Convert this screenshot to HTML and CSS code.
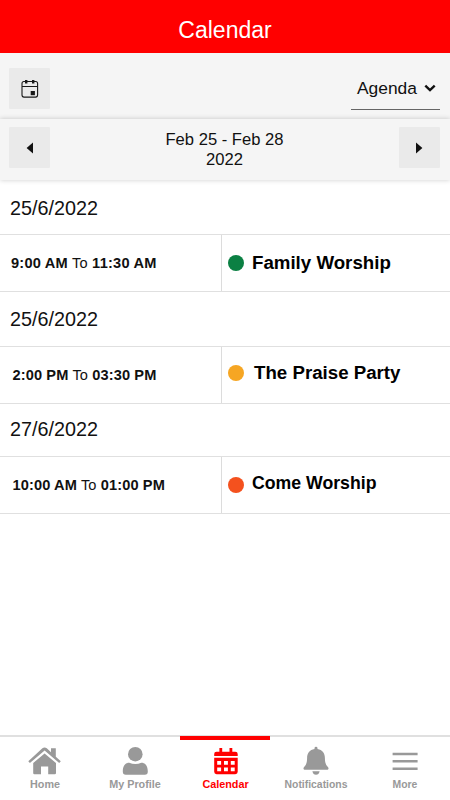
FILE: index.html
```html
<!DOCTYPE html>
<html lang="en">
<head>
    <meta charset="UTF-8">
    <title>Calendar</title>
    <link rel="stylesheet" href="styles.css">
</head>
<body>
<div class="app">
    <header class="header">
        <h1>Calendar</h1>
    </header>
    <div class="toolbar">
        <button class="btn">
            <svg width="18" height="20" viewBox="0 0 18 20">
                <rect x="1" y="2.5" width="15.6" height="15.6" rx="2" fill="none" stroke="#181818" stroke-width="1.1"/>
                <path d="M1 7.5h15.6M2.5 2.5h12.6" stroke="#181818" stroke-width="1.1"/>
                <path d="M5.2 .9v3.6M12.2 .9v3.6" stroke="#181818" stroke-width="2.4"/>
                <rect x="9.7" y="12" width="4.2" height="4.2" fill="#181818"/>
            </svg>
        </button>
        <div class="select">
            <span>Agenda</span>
            <svg width="12" height="9" viewBox="0 0 12 9">
                <path d="M1.3 1.7L6 6.1l4.7-4.4" fill="none" stroke="#111" stroke-width="2.4"/>
            </svg>
        </div>
    </div>
    <div class="range">
        <button class="btn">
            <svg width="8" height="12" viewBox="0 0 8 12"><path d="M7 .6v10.8L.6 6z" fill="#111"/></svg>
        </button>
        <p>Feb 25 - Feb 28<br>2022</p>
        <button class="btn">
            <svg width="8" height="12" viewBox="0 0 8 12"><path d="M1 .6v10.8L7.4 6z" fill="#111"/></svg>
        </button>
    </div>
    <main class="agenda">
        <section class="day first">
            <h2>25/6/2022</h2>
            <div class="event">
                <div class="time"><b>9:00 AM</b> To <b>11:30 AM</b></div>
                <div class="name"><i class="dot green"></i><span>Family Worship</span></div>
            </div>
        </section>
        <section class="day second">
            <h2>25/6/2022</h2>
            <div class="event">
                <div class="time"><b>2:00 PM</b> To <b>03:30 PM</b></div>
                <div class="name"><i class="dot yellow"></i><span>The Praise Party</span></div>
            </div>
        </section>
        <section class="day third">
            <h2>27/6/2022</h2>
            <div class="event">
                <div class="time"><b>10:00 AM</b> To <b>01:00 PM</b></div>
                <div class="name"><i class="dot orange"></i><span>Come Worship</span></div>
            </div>
        </section>
    </main>
    <nav class="tabs">
        <a class="tab">
            <svg width="34" height="30" viewBox="0 0 34 30">
                <path d="M.3 15.2L14.4 2.3q2.2-1.7 4.4 0L23 6.3V2.2h4.8v8.5l5 4.5-1.6 1.9L16.6 4.6 1.9 17.1z"/>
                <path d="M16.6 7.4L28 17v10q0 1.2-1.2 1.2h-6.6v-7.7h-7.2v7.7H6.4q-1.2 0-1.2-1.2V17z"/>
            </svg>
            <span>Home</span>
        </a>
        <a class="tab">
            <svg width="34" height="30" viewBox="0 0 34 30">
                <circle cx="17.3" cy="8.2" r="7.3"/>
                <path d="M4.8 25.5c0-6 2.5-8.8 6.5-8.8q2.8 1.4 6 1.4t6-1.4c4 0 6.5 2.8 6.5 8.8q0 3.3-3 3.3h-19q-3 0-3-3.3z"/>
            </svg>
            <span>My Profile</span>
        </a>
        <a class="tab active">
            <svg width="34" height="30" viewBox="0 0 34 30">
                <path d="M5.2 10V7.9q0-2.2 2.2-2.2h3V2h2.8v3.7h7.3V2h2.8v3.7h3q2.4 0 2.4 2.2V10z"/>
                <path fill-rule="evenodd" d="M5.2 11.8h23.5v14q0 2.4-2.4 2.4H7.6q-2.4 0-2.4-2.4zM8.2 15v3.8h3.9V15zM15 15v3.8h3.9V15zM21.8 15v3.8h3.9V15zM8.2 21.4v3.8h3.9v-3.8zM15 21.4v3.8h3.9v-3.8zM21.8 21.4v3.8h3.9v-3.8z"/>
            </svg>
            <span>Calendar</span>
        </a>
        <a class="tab bell">
            <svg width="34" height="30" viewBox="0 0 34 30">
                <path d="M15.5 3V2.2q0-1.4 1.5-1.4t1.5 1.4V3c4.9.8 7.4 4.4 7.4 9 0 5 1.2 7.2 3 9.1 1.2 1.4.6 2.7-1.2 2.7H6.3c-1.8 0-2.4-1.3-1.2-2.7 1.8-1.9 3-4.1 3-9.1 0-4.6 2.5-8.2 7.4-9z"/>
                <path d="M13.4 25.3h7.2q-.7 3.5-3.6 3.5t-3.6-3.5z"/>
            </svg>
            <span>Notifications</span>
        </a>
        <a class="tab more">
            <svg width="34" height="30" viewBox="0 0 34 30">
                <path d="M4.6 6.8h25v2.4h-25zM4.6 14.1h25v2.4h-25zM4.6 21.5h25v2.4h-25z"/>
            </svg>
            <span>More</span>
        </a>
    </nav>
</div>
</body>
</html>
```
FILE: styles.css
```css
*{
    margin: 0;
    padding: 0;
    box-sizing: border-box;
}
body{
    font-family: "Liberation Sans", Arial, sans-serif;
    color: #111;
    background: #fff;
}
.app{
    width: 450px;
    height: 800px;
    display: flex;
    flex-direction: column;
    overflow: hidden;
}
.header{
    height: 53px;
    padding-top: 17px;
    background: #f00;
    color: #fff;
    text-align: center;
}
.header h1{
    font-size: 23px;
    line-height: 26px;
    font-weight: normal;
}
.toolbar{
    height: 66px;
    padding: 15px 10px 0 9px;
    display: flex;
    justify-content: space-between;
    background: #f5f5f5;
}
.btn{
    width: 41px;
    height: 41px;
    display: flex;
    align-items: center;
    justify-content: center;
    border: none;
    border-radius: 1px;
    background: #eaeaea;
}
.select{
    width: 89px;
    height: 42px;
    padding: 0 4px 0 6px;
    display: flex;
    align-items: center;
    justify-content: space-between;
    border-bottom: 1px solid #666;
    font-size: 17.4px;
}
.range{
    height: 61px;
    padding: 8px 10px 0 9px;
    display: flex;
    justify-content: space-between;
    background: #f5f5f5;
    box-shadow: 0 0 5px rgba(0, 0, 0, 0.2);
}
.range p{
    padding-top: 3px;
    font-size: 16.6px;
    line-height: 20px;
    text-align: center;
}
.day h2{
    height: 54px;
    padding-left: 10px;
    font-size: 19.8px;
    line-height: 56px;
    font-weight: normal;
}
.day.second h2{
    line-height: 55px;
}
.day.third h2{
    height: 52px;
    line-height: 50px;
}
.event{
    height: 58px;
    display: flex;
    border-top: 1px solid #e0e0e0;
    border-bottom: 1px solid #e0e0e0;
}
.time{
    width: 222px;
    padding-left: 11px;
    border-right: 1px solid #dcdcdc;
    font-size: 14.6px;
    line-height: 56px;
    letter-spacing: 0.22px;
}
.second .time, .third .time{
    padding-left: 12.5px;
    letter-spacing: 0.12px;
}
.name{
    padding-left: 6px;
    display: flex;
    align-items: center;
    gap: 8px;
    font-size: 18.7px;
    font-weight: bold;
    color: #000;
}
.second .name{
    padding-bottom: 4px;
    gap: 10px;
}
.third .name{
    font-size: 17.7px;
}
.third .name span{
    padding-bottom: 4px;
}
.dot{
    width: 16px;
    height: 16px;
    border-radius: 50%;
}
.green{
    background: #0b8043;
}
.yellow{
    background: #f6a623;
}
.orange{
    background: #f4511e;
}
.tabs{
    height: 65px;
    margin-top: auto;
    display: flex;
    border-top: 2px solid #e0e0e0;
}
.tab{
    width: 90px;
    padding-top: 9px;
    display: flex;
    flex-direction: column;
    align-items: center;
    gap: 2px;
    color: #999;
    font-size: 10.8px;
    line-height: 13px;
    font-weight: bold;
}
.tab svg{
    fill: currentColor;
}
.active{
    margin-top: -1px;
    padding: 6px 0 0 1px;
    border-top: 4px solid #f00;
    color: #f00;
}
.bell, .more{
    font-size: 10.4px;
}
.bell{
    padding-left: 2px;
}
```
